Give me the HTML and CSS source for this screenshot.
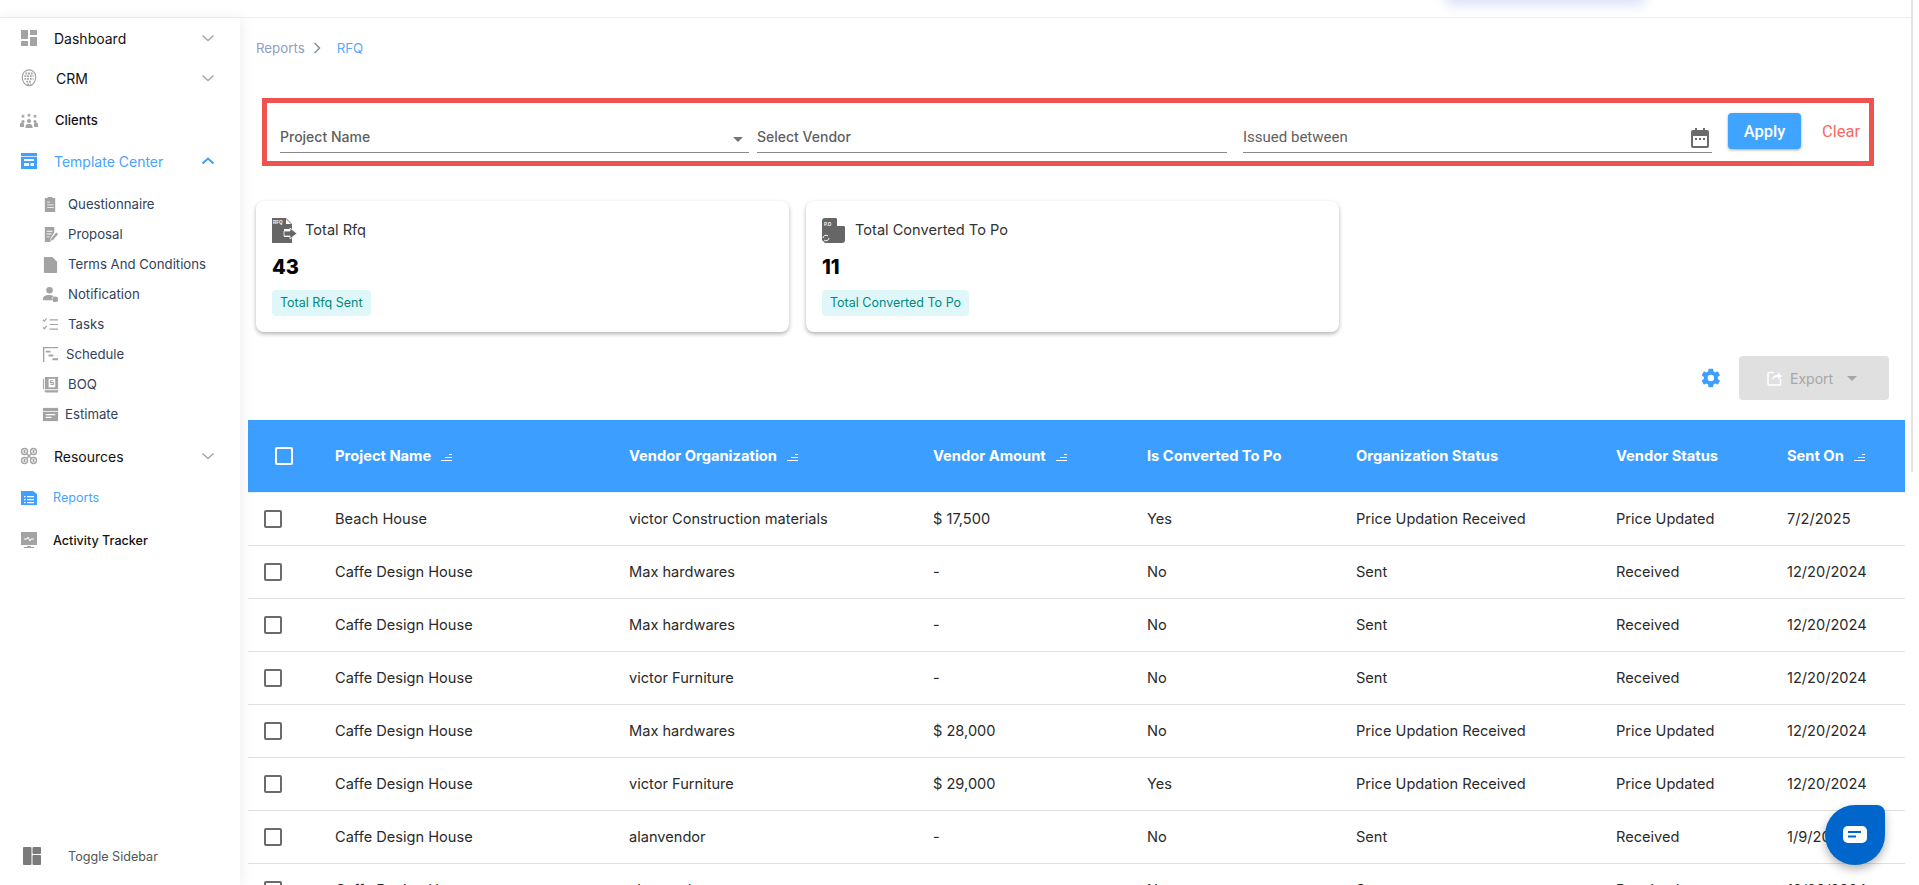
FILE: index.html
```html
<!DOCTYPE html>
<html lang="en">
  <head>
    <meta charset="UTF-8" />
    <meta name="viewport" content="width=device-width, initial-scale=1.0" />
    <title>RFQ Report</title>
    <link rel="stylesheet" href="styles.css">
  </head>
  <body>
    <div class="topbar"><div class="topbar-glow"></div></div>
    <div class="app">
      <aside class="sidebar">
        <nav class="menu">
          <div class="menu-item h40">
            <svg class="icon" viewBox="0 0 18 18" fill="#a3a3a3"><rect x="1" y="1" width="7" height="9"/><rect x="10" y="1" width="7" height="5"/><rect x="1" y="12" width="7" height="5"/><rect x="10" y="8" width="7" height="9"/></svg>
            <span class="menu-label">Dashboard</span>
            <svg class="chev" viewBox="0 0 14 8"><path d="M1.5 1.5 7 6.500l5.500-5"/></svg>
          </div>
          <div class="menu-item h40">
            <svg class="icon" viewBox="0 0 18 20" fill="none" stroke="#a3a3a3" stroke-width="1.3"><path d="M1.500 9C1.500 4 5 1 9 1s7.500 3 7.500 8c0 5-3 9.500-7.500 9.500S1.500 14 1.500 9z"/><path d="M5 5h8M4 8h10M4 11h10M6 14h6M7 17h4" stroke-dasharray="2 1" stroke-width="2"/></svg>
            <span class="menu-label crm">CRM</span>
            <svg class="chev" viewBox="0 0 14 8"><path d="M1.5 1.5 7 6.500l5.500-5"/></svg>
          </div>
          <div class="menu-item h43">
            <svg class="icon" viewBox="0 0 18 18" fill="#a3a3a3"><circle cx="9" cy="10" r="2"/><path d="M5.500 17v-2a3 3 0 0 1 3-2h1a3 3 0 0 1 3 2v2z"/><circle cx="3" cy="10.500" r="1.500"/><circle cx="15" cy="10.500" r="1.500"/><path d="M0 16v-2a2 2 0 0 1 4-1v3zM18 16v-2a2 2 0 0 0-4-1v3z"/><path d="m3 3 .7 1.600H5L4 5.600l.4 1.400L3 6.200 1.600 7 2 5.600 1 4.600h1.300zM9 2l.7 1.600H11L10 4.600l.4 1.400L9 5.200 7.600 6 8 4.600 7 3.600h1.300zM15 3l.7 1.600H17L16 5.600l.4 1.400-1.400-.8-1.400.8.400-1.400-1-1h1.300z"/></svg>
            <span class="menu-label med clients">Clients</span>
          </div>
          <div class="menu-item h40 active">
            <svg class="icon" viewBox="0 0 18 18"><path fill="#3fa0ff" d="M1 1h16v16H1z"/><path fill="#fff" d="M1 4h16v.8H1zM4 7h10v2H4zM4 11h5v3H4zM10.500 11H14v3h-3.500z"/></svg>
            <span class="menu-label">Template Center</span>
            <svg class="chev" viewBox="0 0 14 8"><path d="M1.5 6.500 7 1.500l5.500 5"/></svg>
          </div>
          <div class="submenu">
            <div class="sub-item">
              <svg class="sub-icon" viewBox="0 0 18 18" fill="#a3a3a3"><path d="M3 2h3V1h5v1h3v15H3z"/><path fill="#fff" d="M5.500 6h3v.8h-3zM5.500 9h7v.8h-7zM5.500 12h7v.8h-7z"/></svg>
              <span>Questionnaire</span>
            </div>
            <div class="sub-item">
              <svg class="sub-icon" viewBox="0 0 18 18" fill="#a3a3a3"><path d="M3 1h10v6l-4 6v4H3z"/><path d="m15 7 2 1.500-5 6-2.500 1 .5-2.500z"/><path fill="#fff" d="M5 5h6v1H5zM5 8h5v1H5zM5 11h3v1H5z"/></svg>
              <span>Proposal</span>
            </div>
            <div class="sub-item">
              <svg class="sub-icon" viewBox="0 0 18 18" fill="#a3a3a3"><path d="M3 1h8l5 5v11a1 1 0 0 1-1 1H3a1 1 0 0 1-1-1V2a1 1 0 0 1 1-1z"/></svg>
              <span>Terms And Conditions</span>
            </div>
            <div class="sub-item">
              <svg class="sub-icon" viewBox="0 0 18 18" fill="#a3a3a3"><circle cx="8" cy="4.500" r="3.500"/><path d="M1 15v-1.500C1 11 4 9.500 8 9.500c1.500 0 2.800.2 4 .7V12h-1.500v3z"/><circle cx="14" cy="14" r="3"/></svg>
              <span>Notification</span>
            </div>
            <div class="sub-item">
              <svg class="sub-icon" viewBox="0 0 18 18" fill="none" stroke="#a3a3a3" stroke-width="1.3"><path d="m1 4 1.500 1.500L5 2.500M1 12l1.500 1.500L5 10.500M8 4h9M8 9h9M8 14h9"/></svg>
              <span>Tasks</span>
            </div>
            <div class="sub-item">
              <svg class="sub-icon" viewBox="0 0 18 18" fill="#a3a3a3"><path d="M1 1h16v1.500H2.500V17H1z"/><path d="M4 5h5v2H4zM7 9h5v2H7zM11 13h6v2h-6z"/></svg>
              <span class="shift-left">Schedule</span>
            </div>
            <div class="sub-item">
              <svg class="sub-icon" viewBox="0 0 18 18" fill="#a3a3a3"><path d="M3 1v13h14V1H6zM1 3h1v11H1z"/><path d="M3 15h14v2.500H4a2 2 0 0 1-1-2.500z"/><rect x="7" y="3" width="7" height="9" fill="#fff"/><path d="M12 5H9v2h3v2H9" fill="none" stroke="#a3a3a3" stroke-width="1.100"/></svg>
              <span>BOQ</span>
            </div>
            <div class="sub-item">
              <svg class="sub-icon" viewBox="0 0 18 18" fill="#a3a3a3"><path d="M1 2h16v14H1z"/><path fill="#fff" d="M1 5.500h16v.8H1zM4 8.500h10v1.300H4zM4 11.500h6v1.300H4z"/></svg>
              <span class="shift-more">Estimate</span>
            </div>
          </div>
          <div class="menu-item h40">
            <svg class="icon" viewBox="0 0 18 18" fill="none" stroke="#a3a3a3" stroke-width="1.4"><circle cx="4.500" cy="4.500" r="3"/><circle cx="13.500" cy="4.500" r="3"/><circle cx="4.500" cy="13.500" r="3"/><circle cx="13.500" cy="13.500" r="3"/><path d="m6.500 6.500 5 5M11.500 6.500l-5 5"/><path d="M4.500 3v3M13.500 3v3M4.500 12v3M13.500 12v3" stroke-width="1.800"/></svg>
            <span class="menu-label">Resources</span>
            <svg class="chev" viewBox="0 0 14 8"><path d="M1.5 1.500 7 6.500l5.500-5"/></svg>
          </div>
          <div class="menu-item h43 active">
            <svg class="icon" viewBox="0 0 18 18"><path fill="#3fa0ff" d="M1 2h12l4 3v11H1z"/><path fill="#fff" d="M4 7h1.500v1.300H4zM7 7h7v1.300H7zM4 10h1.500v1.300H4zM7 10h7v1.300H7zM4 13h1.500v1.300H4zM7 13h7v1.300H7z"/></svg>
            <span class="menu-label small">Reports</span>
          </div>
          <div class="menu-item h42">
            <svg class="icon" viewBox="0 0 18 18"><path fill="#a3a3a3" d="M1 1h16v13H1zM7 15h4v1h3v1H4v-1h3z"/><path fill="none" stroke="#fff" d="M4 8h3l1-2 2 4 1-2h3"/></svg>
            <span class="menu-label small med">Activity Tracker</span>
          </div>
        </nav>
        <div class="toggle">
          <svg class="toggle-icon" viewBox="0 0 18 18" fill="#7a7a7a"><rect width="8.500" height="18" rx="1"/><rect x="9.500" width="8.500" height="7" rx="1"/><rect x="9.500" y="8" width="8.500" height="10" rx="1"/></svg>
          <span>Toggle Sidebar</span>
        </div>
      </aside>

      <main class="main">
        <div class="crumbs">
          <span class="crumb">Reports</span>
          <svg class="crumb-sep" viewBox="0 0 8 12"><path d="m1.500 1 5 5-5 5"/></svg>
          <span class="crumb-current">RFQ</span>
        </div>

        <section class="filters">
          <div class="field field-project">
            <span>Project Name</span>
            <span class="caret caret-field"></span>
          </div>
          <div class="field field-vendor"><span>Select Vendor</span></div>
          <div class="field field-date">
            <span class="roboto">Issued between</span>
            <svg class="calendar" viewBox="0 0 18 20" fill="#6b6b6b"><path d="M4 0h2v2h6V0h2v2h2a2 2 0 0 1 2 2v14a2 2 0 0 1-2 2H2a2 2 0 0 1-2-2V4a2 2 0 0 1 2-2h2z"/><path fill="#fff" d="M2 8h14v10H2z"/><path d="M4 10h2v2H4zM8 10h2v2H8zM12 10h2v2h-2z"/></svg>
          </div>
          <button class="apply">Apply</button>
          <span class="clear">Clear</span>
        </section>

        <section class="cards">
          <div class="card">
            <div class="card-head">
              <svg class="card-icon" viewBox="0 0 25 25" fill="#666"><path d="M0 0h14l6 6v5h-8v8h8v6H0z"/><path fill="#fff" d="M14 1l5 5h-5z"/><text x="1" y="6" class="icon-text">RFQ</text><path d="M12 13h6v-3l7 5.500-7 5.500v-3h-6z" stroke="#fff" stroke-width=".8"/></svg>
              <span>Total Rfq</span>
            </div>
            <div class="card-value">43</div>
            <span class="card-tag">Total Rfq Sent</span>
          </div>
          <div class="card">
            <div class="card-head">
              <svg class="card-icon card-icon-po" viewBox="0 0 23 25" fill="#666"><path d="M3 0h11l9 9v13a3 3 0 0 1-3 3H3l-3-3V3a3 3 0 0 1 3-3z"/><path fill="#fff" d="M15 0l8 8h-8z"/><text x="2" y="8" class="icon-text">P.O</text><path d="M1 20a3 3 0 0 1 5-2M7 20a3 3 0 0 1-5 2" fill="none" stroke="#fff"/></svg>
              <span>Total Converted To Po</span>
            </div>
            <div class="card-value">11</div>
            <span class="card-tag">Total Converted To Po</span>
          </div>
        </section>

        <div class="toolbar">
          <svg class="gear" viewBox="0 0 24 24"><path fill="#3c9eff" fill-rule="evenodd" d="M19.400 13c.04-.32.060-.66.060-1s-.020-.68-.070-1l2.160-1.680a.5.500 0 0 0 .12-.64l-2.040-3.540a.5.500 0 0 0-.62-.22l-2.550 1.020a7.500 7.500 0 0 0-1.730-1l-.38-2.700A.5.500 0 0 0 13.840 1.800H9.760a.5.500 0 0 0-.5.420l-.38 2.700a7.800 7.800 0 0 0-1.730 1L4.600 4.900a.5.500 0 0 0-.62.220L1.950 8.660a.5.500 0 0 0 .12.64L4.230 11a8 8 0 0 0 0 2l-2.160 1.680a.5.500 0 0 0-.12.64l2.040 3.540c.13.220.39.300.62.220l2.550-1.020c.53.410 1.110.750 1.730 1l.38 2.700c.05.250.250.420.5.420h4.080c.25 0 .45-.17.500-.42l.38-2.700a7.500 7.500 0 0 0 1.730-1l2.550 1.020c.23.080.49 0 .62-.22l2.040-3.540a.5.500 0 0 0-.12-.64zM11.800 15.500a3.500 3.500 0 1 1 0-7 3.500 3.500 0 0 1 0 7z"/></svg>
          <button class="export">
            <svg class="export-icon" viewBox="0 0 16 16" fill="none" stroke="#fff" stroke-width="1.5"><path d="M7 2.500H2a1 1 0 0 0-1 1V14a1 1 0 0 0 1 1h10.500a1 1 0 0 0 1-1V9"/><path d="M5 10c0-3 2-5 6-5V2.500L15 6l-4 3.500V7c-3 0-4.500 1-6 3z" fill="#fff" stroke="none"/></svg>
            <span>Export</span>
            <span class="caret caret-light"></span>
          </button>
        </div>

        <table class="grid">
          <thead>
            <tr>
              <th class="col-check"><span class="check check-head"></span></th>
              <th class="col-project">Project Name<svg class="sort" viewBox="0 0 12 8"><path d="M0 7.500h11M4 4.500h7M8 1.500h3"/></svg></th>
              <th class="col-vendor">Vendor Organization<svg class="sort" viewBox="0 0 12 8"><path d="M0 7.500h11M4 4.500h7M8 1.500h3"/></svg></th>
              <th class="col-amount">Vendor Amount<svg class="sort" viewBox="0 0 12 8"><path d="M0 7.500h11M4 4.500h7M8 1.500h3"/></svg></th>
              <th class="col-converted">Is Converted To Po</th>
              <th class="col-org">Organization Status</th>
              <th class="col-status">Vendor Status</th>
              <th class="col-sent">Sent On<svg class="sort" viewBox="0 0 12 8"><path d="M0 7.500h11M4 4.500h7M8 1.500h3"/></svg></th>
            </tr>
          </thead>
          <tbody>
            <tr><td><span class="check"></span></td><td>Beach House</td><td>victor Construction materials</td><td>$ 17,500</td><td>Yes</td><td>Price Updation Received</td><td>Price Updated</td><td>7/2/2025</td></tr>
            <tr><td><span class="check"></span></td><td>Caffe Design House</td><td>Max hardwares</td><td>-</td><td>No</td><td>Sent</td><td>Received</td><td>12/20/2024</td></tr>
            <tr><td><span class="check"></span></td><td>Caffe Design House</td><td>Max hardwares</td><td>-</td><td>No</td><td>Sent</td><td>Received</td><td>12/20/2024</td></tr>
            <tr><td><span class="check"></span></td><td>Caffe Design House</td><td>victor Furniture</td><td>-</td><td>No</td><td>Sent</td><td>Received</td><td>12/20/2024</td></tr>
            <tr><td><span class="check"></span></td><td>Caffe Design House</td><td>Max hardwares</td><td>$ 28,000</td><td>No</td><td>Price Updation Received</td><td>Price Updated</td><td>12/20/2024</td></tr>
            <tr><td><span class="check"></span></td><td>Caffe Design House</td><td>victor Furniture</td><td>$ 29,000</td><td>Yes</td><td>Price Updation Received</td><td>Price Updated</td><td>12/20/2024</td></tr>
            <tr><td><span class="check"></span></td><td>Caffe Design House</td><td>alanvendor</td><td>-</td><td>No</td><td>Sent</td><td>Received</td><td>1/9/2025</td></tr>
            <tr><td><span class="check"></span></td><td>Caffe Design House</td><td>alanvendor</td><td>-</td><td>No</td><td>Sent</td><td>Received</td><td>12/20/2024</td></tr>
          </tbody>
        </table>
      </main>
      <div class="scroll-line"></div>
    </div>

    <div class="chat">
      <svg class="chat-icon" viewBox="0 0 24 18"><rect width="24" height="17" rx="5" fill="#fff"/><path d="M5 6h13M5 10.500h8" stroke="#0066cc" stroke-width="2"/></svg>
    </div>
  </body>
</html>
```

FILE: styles.css
```css
* {
  box-sizing: border-box;
}
html,
body {
  height: 100%;
  overflow: hidden;
}
body {
  margin: 0;
  background: #fff;
  font-family: Inter, "Open Sans", sans-serif;
  color: #222;
}
.topbar {
  position: relative;
  height: 18px;
  margin-right: 8px;
  border-bottom: 1px solid #eeeeee;
  overflow: hidden;
}
.topbar-glow {
  position: absolute;
  top: -30px;
  left: 1446px;
  width: 198px;
  height: 30px;
  background: #e9eefc;
  box-shadow: 0 4px 14px #d5dcf7;
}
.app {
  display: flex;
  height: 867px;
}

/* sidebar */
.sidebar {
  display: flex;
  flex-direction: column;
  justify-content: space-between;
  flex: 0 0 240px;
  padding: 0 0 20px 20px;
  background: #fff;
  box-shadow: 2px 0 12px rgba(0, 0, 0, 0.07);
  z-index: 1;
}
.menu-item {
  display: flex;
  align-items: center;
  padding-right: 25px;
  font-size: 14px;
  color: #111;
}
.h40 {
  height: 40px;
}
.h42 {
  height: 42px;
}
.h43 {
  height: 43px;
}
.icon {
  flex: 0 0 18px;
  width: 18px;
  height: 18px;
}
.menu-label {
  flex: 1;
  padding-left: 16px;
}
.menu-label.crm {
  padding-left: 18px;
}
.menu-label.clients {
  padding-left: 17px;
  font-size: 13px;
}
.menu-label.med {
  font-weight: 500;
}
.menu-label.small {
  padding-left: 15px;
  font-size: 12.6px;
}
.chev {
  width: 14px;
  height: 8px;
  fill: none;
  stroke: #a9a9a9;
  stroke-width: 1.6;
}
.active {
  color: #4aa3ff;
}
.active .chev {
  stroke: #3c9eff;
  stroke-width: 2;
}
.submenu {
  padding: 8px 0 7px 22px;
}
.sub-item {
  display: flex;
  align-items: center;
  gap: 9px;
  height: 30px;
  font-size: 13.2px;
  color: #33415c;
}
.sub-icon {
  flex: 0 0 17px;
  width: 17px;
  height: 17px;
}
.shift-left {
  margin-left: -2px;
}
.shift-more {
  margin-left: -3px;
}
.toggle {
  display: flex;
  align-items: center;
  gap: 27px;
  padding-left: 3px;
  font-size: 12.6px;
  color: #555;
}
.toggle-icon {
  width: 18px;
  height: 18px;
}

/* main column */
.main {
  flex: 1;
  min-width: 0;
  padding: 22px 7px 0 8px;
  overflow: hidden;
  background: #fff;
}
.crumbs {
  display: flex;
  align-items: center;
  height: 16px;
  padding-left: 8px;
  font-size: 13.3px;
}
.crumb {
  color: #8da0bd;
}
.crumb-sep {
  width: 8px;
  height: 12px;
  margin: 0 16px 0 8px;
  fill: none;
  stroke: #8a8f98;
  stroke-width: 1.5;
}
.crumb-current {
  color: #5aa9ff;
}
.filters {
  display: flex;
  align-items: stretch;
  width: 1612px;
  height: 68px;
  margin: 42px 0 0 14px;
  padding: 0 0 0 13px;
  border: 5px solid #ef5350;
}
.field {
  display: flex;
  align-items: center;
  justify-content: space-between;
  width: 469px;
  height: 36px;
  margin-top: 14px;
  padding-top: 4px;
  border-bottom: 1px solid #8a8a8a;
  font-size: 14px;
  font-weight: 500;
  color: #5f5f5f;
}
.field-project {
  margin-right: 8px;
  padding-right: 6px;
}
.field-vendor {
  width: 470px;
  margin-right: 16px;
}
.field-date {
  margin-right: 16px;
  padding-right: 3px;
}
.roboto {
  font-family: Roboto, sans-serif;
  font-size: 15px;
  font-weight: 400;
}
.caret {
  display: inline-block;
  width: 0;
  height: 0;
  border-left: 5px solid transparent;
  border-right: 5px solid transparent;
  border-top: 5px solid #757575;
}
.caret-field {
  margin-top: 5px;
}
.calendar {
  width: 18px;
  height: 20px;
  margin-top: 2px;
}
.apply {
  align-self: center;
  width: 73px;
  height: 36px;
  margin-bottom: 2px;
  border: 0;
  border-radius: 4px;
  background: #3fa4ff;
  color: #fff;
  font-family: Roboto, sans-serif;
  font-size: 16.5px;
  font-weight: 500;
  box-shadow: 0 1px 3px rgba(0, 0, 0, 0.35);
}
.clear {
  align-self: center;
  margin: 0 0 2px 21px;
  font-family: Roboto, sans-serif;
  font-size: 16.5px;
  color: #f96a63;
}

/* summary cards */
.cards {
  display: flex;
  gap: 17px;
  margin: 35px 0 0 8px;
}
.card {
  width: 533px;
  height: 131px;
  padding: 16px;
  border-radius: 8px;
  background: #fff;
  box-shadow: 0 2px 4px rgba(0, 0, 0, 0.3);
}
.card-head {
  display: flex;
  align-items: center;
  gap: 8px;
  height: 26px;
  font-size: 14.6px;
  color: #333;
}
.card-icon {
  width: 25px;
  height: 25px;
}
.card-icon-po {
  width: 23px;
  margin-right: 2px;
}
.icon-text {
  font-family: "Liberation Sans", sans-serif;
  font-size: 4.5px;
  font-weight: 700;
  fill: #fff;
}
.card-value {
  height: 24px;
  margin-top: 12px;
  font-size: 20px;
  font-weight: 800;
  line-height: 24px;
  color: #000;
}
.card-tag {
  display: block;
  width: fit-content;
  height: 26px;
  margin-top: 11px;
  padding: 0 8px;
  border-radius: 4px;
  background: #e0f7fa;
  color: #00897b;
  font-size: 12.5px;
  line-height: 26px;
}

/* export row */
.toolbar {
  display: flex;
  justify-content: flex-end;
  align-items: center;
  gap: 17px;
  height: 44px;
  margin: 24px 23px 0 0;
}
.gear {
  width: 22px;
  height: 22px;
}
.export {
  display: flex;
  align-items: center;
  width: 150px;
  height: 44px;
  padding: 0 0 0 28px;
  border: 0;
  border-radius: 4px;
  background: #e0e0e0;
  color: #a6a6a6;
  font-family: inherit;
  font-size: 14px;
}
.export-icon {
  width: 16px;
  height: 16px;
  margin-right: 7px;
}
.caret-light {
  margin-left: 14px;
  border-top-color: #a6a6a6;
}

/* table */
.grid {
  width: 1657px;
  margin-top: 20px;
  border-collapse: collapse;
  table-layout: fixed;
  font-size: 14.6px;
}
.grid th {
  height: 72px;
  padding: 0;
  border-bottom: 1px solid #e4effa;
  background: #3c9fff;
  color: #fff;
  font-size: 14.7px;
  font-weight: 700;
  text-align: left;
  white-space: nowrap;
}
.grid td {
  height: 53px;
  padding: 0;
  border-bottom: 1px solid #e0e0e0;
  color: #2a2a2a;
  white-space: nowrap;
}
.sort {
  width: 12px;
  height: 8px;
  margin-left: 10px;
  fill: none;
  stroke: #fff;
  stroke-width: 1;
}
.col-check {
  width: 87px;
}
.col-project {
  width: 294px;
}
.col-vendor {
  width: 304px;
}
.col-amount {
  width: 214px;
}
.col-converted {
  width: 209px;
}
.col-org {
  width: 260px;
}
.col-status {
  width: 171px;
}
.col-sent {
  width: 118px;
}
.check {
  display: block;
  width: 18px;
  height: 18px;
  margin-left: 16px;
  border: 2px solid #6b6b6b;
  border-radius: 2px;
}
.check-head {
  margin-left: 27px;
  border-color: #fff;
}
.scroll-line {
  position: absolute;
  top: 0;
  left: 1911px;
  width: 2px;
  height: 472px;
  background: #e4e4e4;
}

/* chat bubble */
.chat {
  position: fixed;
  left: 1825px;
  top: 805px;
  display: flex;
  align-items: center;
  justify-content: center;
  width: 60px;
  height: 60px;
  border-radius: 30px 8px 30px 30px;
  background: #0066cc;
  box-shadow: 0 4px 10px rgba(0, 0, 0, 0.3);
}
.chat-icon {
  width: 24px;
  height: 18px;
}
```
